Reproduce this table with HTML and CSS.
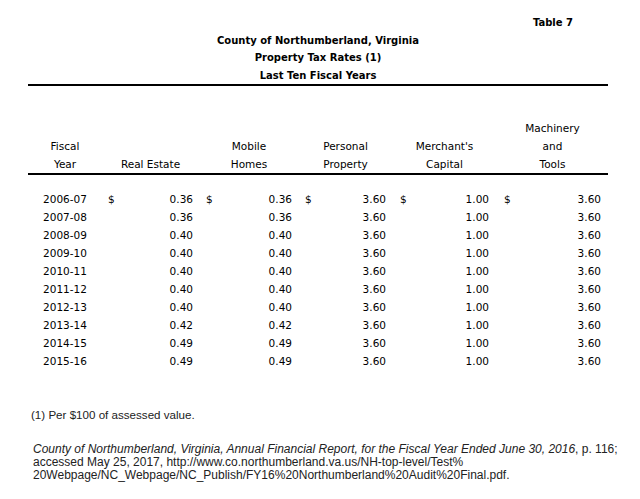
FILE: index.html
```html
<!DOCTYPE html>
<html lang="en">
<head>
<meta charset="utf-8">
<title>Property Tax Rates</title>
<link rel="stylesheet" href="styles.css">
</head>
<body>
<div class="report">
  <div class="report-head">
    <div class="table-no">Table 7</div>
    <div class="title">County of Northumberland, Virginia</div>
    <div class="title">Property Tax Rates (1)</div>
    <div class="title">Last Ten Fiscal Years</div>
  </div>

  <div class="rates">
    <div class="rate-row rate-head">
      <div class="col0">Fiscal<br>Year</div>
      <div class="col1 hd">Real Estate</div>
      <div class="col2 hd">Mobile<br>Homes</div>
      <div class="col3 hd">Personal<br>Property</div>
      <div class="col4 hd">Merchant's<br>Capital</div>
      <div class="col5 hd">Machinery<br>and<br>Tools</div>
    </div>

    <div class="rate-body">
      <div class="rate-row">
        <div class="col0">2006-07</div>
        <div class="col1 amt"><span>$</span><span class="val">0.36</span></div>
        <div class="col2 amt"><span>$</span><span class="val">0.36</span></div>
        <div class="col3 amt"><span>$</span><span class="val">3.60</span></div>
        <div class="col4 amt"><span>$</span><span class="val">1.00</span></div>
        <div class="col5 amt"><span>$</span><span class="val">3.60</span></div>
      </div>
      <div class="rate-row">
        <div class="col0">2007-08</div>
        <div class="col1 amt"><span class="val">0.36</span></div>
        <div class="col2 amt"><span class="val">0.36</span></div>
        <div class="col3 amt"><span class="val">3.60</span></div>
        <div class="col4 amt"><span class="val">1.00</span></div>
        <div class="col5 amt"><span class="val">3.60</span></div>
      </div>
      <div class="rate-row">
        <div class="col0">2008-09</div>
        <div class="col1 amt"><span class="val">0.40</span></div>
        <div class="col2 amt"><span class="val">0.40</span></div>
        <div class="col3 amt"><span class="val">3.60</span></div>
        <div class="col4 amt"><span class="val">1.00</span></div>
        <div class="col5 amt"><span class="val">3.60</span></div>
      </div>
      <div class="rate-row">
        <div class="col0">2009-10</div>
        <div class="col1 amt"><span class="val">0.40</span></div>
        <div class="col2 amt"><span class="val">0.40</span></div>
        <div class="col3 amt"><span class="val">3.60</span></div>
        <div class="col4 amt"><span class="val">1.00</span></div>
        <div class="col5 amt"><span class="val">3.60</span></div>
      </div>
      <div class="rate-row">
        <div class="col0">2010-11</div>
        <div class="col1 amt"><span class="val">0.40</span></div>
        <div class="col2 amt"><span class="val">0.40</span></div>
        <div class="col3 amt"><span class="val">3.60</span></div>
        <div class="col4 amt"><span class="val">1.00</span></div>
        <div class="col5 amt"><span class="val">3.60</span></div>
      </div>
      <div class="rate-row">
        <div class="col0">2011-12</div>
        <div class="col1 amt"><span class="val">0.40</span></div>
        <div class="col2 amt"><span class="val">0.40</span></div>
        <div class="col3 amt"><span class="val">3.60</span></div>
        <div class="col4 amt"><span class="val">1.00</span></div>
        <div class="col5 amt"><span class="val">3.60</span></div>
      </div>
      <div class="rate-row">
        <div class="col0">2012-13</div>
        <div class="col1 amt"><span class="val">0.40</span></div>
        <div class="col2 amt"><span class="val">0.40</span></div>
        <div class="col3 amt"><span class="val">3.60</span></div>
        <div class="col4 amt"><span class="val">1.00</span></div>
        <div class="col5 amt"><span class="val">3.60</span></div>
      </div>
      <div class="rate-row">
        <div class="col0">2013-14</div>
        <div class="col1 amt"><span class="val">0.42</span></div>
        <div class="col2 amt"><span class="val">0.42</span></div>
        <div class="col3 amt"><span class="val">3.60</span></div>
        <div class="col4 amt"><span class="val">1.00</span></div>
        <div class="col5 amt"><span class="val">3.60</span></div>
      </div>
      <div class="rate-row">
        <div class="col0">2014-15</div>
        <div class="col1 amt"><span class="val">0.49</span></div>
        <div class="col2 amt"><span class="val">0.49</span></div>
        <div class="col3 amt"><span class="val">3.60</span></div>
        <div class="col4 amt"><span class="val">1.00</span></div>
        <div class="col5 amt"><span class="val">3.60</span></div>
      </div>
      <div class="rate-row">
        <div class="col0">2015-16</div>
        <div class="col1 amt"><span class="val">0.49</span></div>
        <div class="col2 amt"><span class="val">0.49</span></div>
        <div class="col3 amt"><span class="val">3.60</span></div>
        <div class="col4 amt"><span class="val">1.00</span></div>
        <div class="col5 amt"><span class="val">3.60</span></div>
      </div>
    </div>
  </div>

  <div class="footnote">(1) Per $100 of assessed value.</div>
</div>

<p class="source"><em>County of Northumberland, Virginia, Annual Financial Report, for the Fiscal Year Ended June 30, 2016</em>, p. 116;<br>accessed May 25, 2017, http://www.co.northumberland.va.us/NH-top-level/Test%<br>20Webpage/NC_Webpage/NC_Publish/FY16%20Northumberland%20Audit%20Final.pdf.</p>
</body>
</html>
```

FILE: styles.css
```css
* {
  box-sizing: border-box;
}

body {
  margin: 0;
  background: #fff;
  color: #000;
  font-family: "DejaVu Sans", Verdana, sans-serif;
}

.report {
  width: 580px;
  margin-left: 28px;
}

.report-head {
  padding-top: 14px;
  border-bottom: 2px solid #000;
}

.table-no {
  text-align: right;
  padding-right: 35px;
  font-weight: bold;
  font-size: 10px;
  line-height: 17.5px;
}

.title {
  text-align: center;
  font-weight: bold;
  font-size: 10px;
  line-height: 17.5px;
}

.rates {
  margin-top: 34px;
  font-size: 10.5px;
}

.rate-row {
  display: grid;
  grid-template-columns: 80px 98px 99px 95px 104px 104px;
  line-height: 17.9px;
}

.rate-head {
  line-height: 17.8px;
  align-items: end;
  border-bottom: 2px solid #000;
}

.rate-body {
  margin-top: 16px;
}

.col0 {
  padding-right: 6px;
  text-align: center;
}

.col1 { padding-right: 13px; }
.col2 { padding-right: 13px; }
.col3 { padding-right: 14px; }
.col4 { padding-right: 15px; }
.col5 { padding-right: 7px; }

.hd {
  text-align: center;
}

.amt {
  display: flex;
}

.val {
  margin-left: auto;
}

.footnote {
  margin-top: 38px;
  padding-left: 3px;
  font-family: "Liberation Sans", Arial, sans-serif;
  font-size: 11.6px;
  line-height: 14px;
  color: #222;
}

.source {
  margin: 21px 0 0 33px;
  font-family: "Liberation Sans", Arial, sans-serif;
  font-size: 12px;
  line-height: 13px;
  color: #222;
  white-space: nowrap;
}
```
